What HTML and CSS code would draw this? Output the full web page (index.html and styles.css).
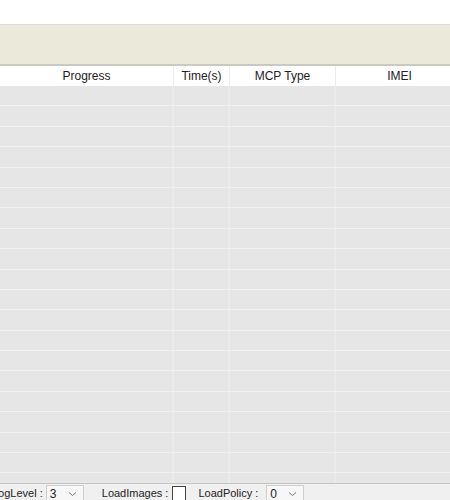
FILE: index.html
```html
<!DOCTYPE html>
<html>
<head>
<meta charset="utf-8">
<link rel="stylesheet" href="styles.css">
</head>
<body>
<div class="page">
  <div class="top"></div>
  <div class="banner"></div>
  <div class="thead">
    <div class="th">Progress</div>
    <div class="th">Time(s)</div>
    <div class="th">MCP Type</div>
    <div class="th">IMEI</div>
  </div>
  <div class="tbody">
    <div class="row"><div class="td"></div><div class="td"></div><div class="td"></div><div class="td"></div></div>
    <div class="row"><div class="td"></div><div class="td"></div><div class="td"></div><div class="td"></div></div>
    <div class="row"><div class="td"></div><div class="td"></div><div class="td"></div><div class="td"></div></div>
    <div class="row"><div class="td"></div><div class="td"></div><div class="td"></div><div class="td"></div></div>
    <div class="row"><div class="td"></div><div class="td"></div><div class="td"></div><div class="td"></div></div>
    <div class="row"><div class="td"></div><div class="td"></div><div class="td"></div><div class="td"></div></div>
    <div class="row"><div class="td"></div><div class="td"></div><div class="td"></div><div class="td"></div></div>
    <div class="row"><div class="td"></div><div class="td"></div><div class="td"></div><div class="td"></div></div>
    <div class="row"><div class="td"></div><div class="td"></div><div class="td"></div><div class="td"></div></div>
    <div class="row"><div class="td"></div><div class="td"></div><div class="td"></div><div class="td"></div></div>
    <div class="row"><div class="td"></div><div class="td"></div><div class="td"></div><div class="td"></div></div>
    <div class="row"><div class="td"></div><div class="td"></div><div class="td"></div><div class="td"></div></div>
    <div class="row"><div class="td"></div><div class="td"></div><div class="td"></div><div class="td"></div></div>
    <div class="row"><div class="td"></div><div class="td"></div><div class="td"></div><div class="td"></div></div>
    <div class="row"><div class="td"></div><div class="td"></div><div class="td"></div><div class="td"></div></div>
    <div class="row"><div class="td"></div><div class="td"></div><div class="td"></div><div class="td"></div></div>
    <div class="row"><div class="td"></div><div class="td"></div><div class="td"></div><div class="td"></div></div>
    <div class="row"><div class="td"></div><div class="td"></div><div class="td"></div><div class="td"></div></div>
    <div class="row"><div class="td"></div><div class="td"></div><div class="td"></div><div class="td"></div></div>
    <div class="row"><div class="td"></div><div class="td"></div><div class="td"></div><div class="td"></div></div>
  </div>
  <div class="footer">
    <span class="label">LogLevel :</span>
    <div class="select"><span>3</span><svg class="chev" width="9" height="6" viewBox="0 0 9 6"><path d="M1 1.5 L4.5 4.5 L8 1.5" fill="none" stroke="#777" stroke-width="1"/></svg></div>
    <span class="label gap">LoadImages :</span>
    <div class="check"></div>
    <span class="label gap2">LoadPolicy :</span>
    <div class="select wide-gap"><span>0</span><svg class="chev" width="9" height="6" viewBox="0 0 9 6"><path d="M1 1.5 L4.5 4.5 L8 1.5" fill="none" stroke="#777" stroke-width="1"/></svg></div>
  </div>
</div>
</body>
</html>
```
FILE: styles.css
```css
html, body {
  margin: 0;
  padding: 0;
  overflow: hidden;
  background: #ffffff;
}
.page {
  width: 450px;
  height: 500px;
  overflow: hidden;
  display: flex;
  flex-direction: column;
  font-family: "Liberation Sans", Arial, sans-serif;
  font-size: 12px;
  color: #222;
}
.top {
  height: 24px;
  flex: none;
  background: #ffffff;
}
.banner {
  height: 39px;
  flex: none;
  background: #eae9da;
  border-top: 1px solid #dcdcd2;
  border-bottom: 2px solid #c9c9c1;
}
.thead {
  flex: none;
  height: 20px;
  display: grid;
  grid-template-columns: 174px 56px 106px 128px;
  background: #ffffff;
}
.th {
  display: flex;
  align-items: center;
  justify-content: center;
  border-right: 1px solid #ececec;
  line-height: 20px;
  color: #222;
}
.tbody {
  flex: none;
  height: 397px;
  overflow: hidden;
  background: #e6e6e6;
}
.row {
  display: grid;
  grid-template-columns: 174px 56px 106px 128px;
  height: 19.4px;
  border-bottom: 1px solid #f1f1f1;
}
.td {
  border-right: 2px solid #ebebeb;
}
.footer {
  flex: none;
  height: 16px;
  border-top: 1px solid #c4c4c4;
  background: #f0f0f0;
  display: flex;
  align-items: flex-start;
  margin-left: -8px;
  padding-top: 1px;
  white-space: nowrap;
  font-size: 11px;
}
.label {
  line-height: 16px;
  color: #222;
}
.gap { margin-left: 18px; }
.gap2 { margin-left: 12px; }
.select {
  margin-left: 3px;
  width: 38px;
  height: 17px;
  box-sizing: border-box;
  border: 1px solid #cfcfcf;
  background: #f7f7f7;
  display: flex;
  align-items: center;
  justify-content: space-between;
  padding: 0 6px 0 3px;
  line-height: 14px;
  font-size: 12px;
}
.wide-gap { margin-left: 8px; }
.chev { margin-top: 1px; }
.check {
  margin-left: 4px;
  width: 14px;
  height: 15px;
  margin-top: 1px;
  box-sizing: border-box;
  border: 1px solid #444;
  background: #ffffff;
}
```
